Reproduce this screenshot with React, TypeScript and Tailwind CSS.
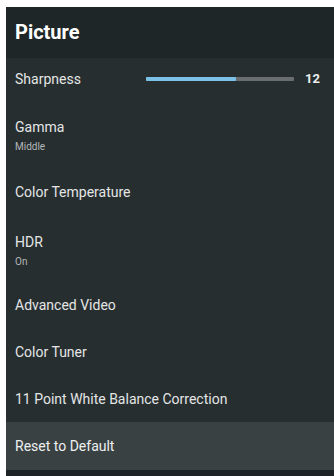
import React from 'react';

interface Row {
  label: string;
  sub?: string;
  h: string;
}

const rows: Row[] = [
  { label: 'Gamma', sub: 'Middle', h: 'h-[68px]' },
  { label: 'Color Temperature', h: 'h-[48px]' },
  { label: 'HDR', sub: 'On', h: 'h-[66px]' },
  { label: 'Advanced Video', h: 'h-[46px]' },
  { label: 'Color Tuner', h: 'h-[48px]' },
  { label: '11 Point White Balance Correction', h: 'h-[46px]' },
];

function App() {
  const sharpness = 12;
  const pct = 61;

  return (
    <div className="w-[334px] h-[476px] bg-white pt-[7px] pl-[6px] overflow-hidden">
      <div
        className="h-[469px] flex flex-col bg-[#272e30]"
        style={{ fontFamily: 'Roboto, "Noto Sans", sans-serif' }}
      >
        {/* header */}
        <div className="h-[51px] shrink-0 bg-[#1f2628] flex items-center px-[9px] pb-[2px]">
          <h1 className="text-[20px] leading-[24px] font-bold text-white">Picture</h1>
        </div>

        {/* sharpness slider row */}
        <div className="h-[42px] shrink-0 flex items-center pl-[9px] pr-[14px]">
          <span className="text-[14px] leading-[16px] text-[#e4e6e6] w-[131px]">Sharpness</span>
          <div className="w-[148px] h-[4px] bg-[#6a6e70] rounded-[1px] relative">
            <div className="h-full bg-[#7cc2e8] rounded-[1px]" style={{ width: `${pct}%` }} />
          </div>
          <span className="ml-auto text-[13px] leading-[16px] font-bold text-[#eceeee]">{sharpness}</span>
        </div>

        {rows.map((r) => (
          <div
            key={r.label}
            className={`${r.h} shrink-0 flex flex-col justify-center px-[9px] ${r.sub ? 'pt-[4px]' : ''}`}
          >
            <span className="text-[14px] leading-[16px] text-[#e4e6e6]">{r.label}</span>
            {r.sub && (
              <span className="mt-[6px] text-[10px] leading-[12px] text-[#b3b7b8]">{r.sub}</span>
            )}
          </div>
        ))}

        {/* focused row */}
        <div className="h-[48px] shrink-0 flex items-center px-[9px] bg-[#3a4143]">
          <span className="text-[14px] leading-[16px] text-[#eef0f0]">Reset to Default</span>
        </div>

        <div className="flex-1 bg-[#1e2426]" />
      </div>
    </div>
  );
}

export default App;
